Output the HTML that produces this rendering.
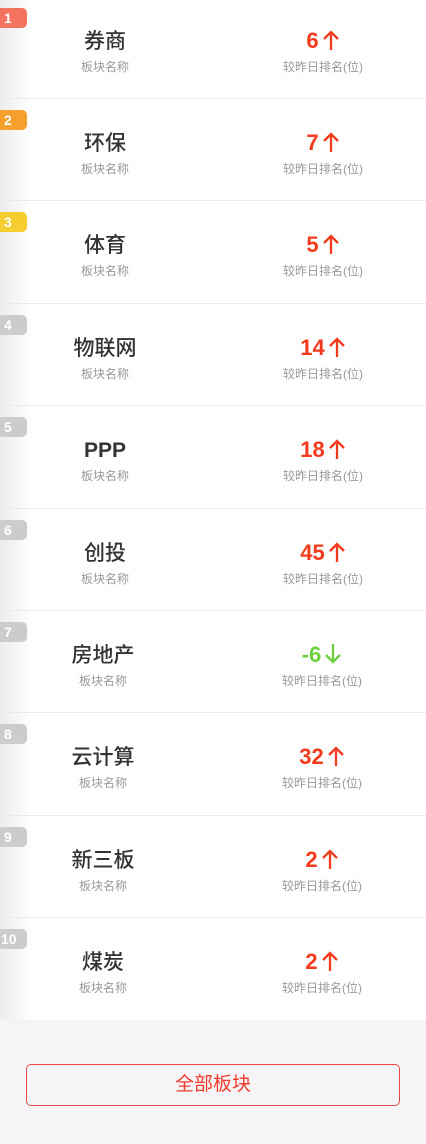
<!DOCTYPE html>
<html><head><meta charset="utf-8"><style>
*{margin:0;padding:0;box-sizing:border-box}
body{width:426px;height:1144px;background:#f5f5f7;font-family:"Liberation Sans","Noto Sans CJK SC",sans-serif;position:relative;overflow:hidden}
.list{position:absolute;left:0;top:0;width:426px;height:1020px;background:#fff;overflow:hidden}
.row{position:absolute;left:0;width:426px;height:102.4px;border-bottom:1px solid #ebebeb;background:linear-gradient(to right,#ececec 0,#fff 32px)}
.badge{position:absolute;left:0;top:11px;width:27px;height:20px;border-radius:0 5px 5px 0;color:#fff;font-size:14px;font-weight:bold;line-height:20px;padding-left:4px}
.name{position:absolute;left:35px;width:140px;top:31px;text-align:center;font-size:21px;font-weight:500;color:#333;line-height:28px}
.sub{position:absolute;top:62px;text-align:center;font-size:12px;color:#999;line-height:16px}
.num{position:absolute;left:253px;width:140px;top:30px;text-align:center;font-size:22px;font-weight:bold;color:#f23a1c;line-height:28px}
.num svg{vertical-align:-3px;margin-left:3px}
.g{color:#6bcf3e}
.btn{position:absolute;left:26px;top:1064px;width:374px;height:42px;border:1px solid #e94848;border-radius:5px;color:#ef3b2c;font-size:19px;text-align:center;line-height:40px}
</style></head><body>
<div class="list">
<div class="row" style="top:-3.4px"><div class="badge" style="background:#f4735f">1</div><div class="name">券商</div><div class="sub" style="left:35px;width:140px">板块名称</div><div class="num">6<svg width="18" height="22" viewBox="0 0 18 22"><path d="M9 21V3M2 10l7-7 7 7" fill="none" stroke="#f23a1c" stroke-width="2.3"/></svg></div><div class="sub" style="left:253px;width:140px">较昨日排名(位)</div></div>
<div class="row" style="top:99px"><div class="badge" style="background:#f5a02c">2</div><div class="name">环保</div><div class="sub" style="left:35px;width:140px">板块名称</div><div class="num">7<svg width="18" height="22" viewBox="0 0 18 22"><path d="M9 21V3M2 10l7-7 7 7" fill="none" stroke="#f23a1c" stroke-width="2.3"/></svg></div><div class="sub" style="left:253px;width:140px">较昨日排名(位)</div></div>
<div class="row" style="top:201.4px"><div class="badge" style="background:#f5cd2e">3</div><div class="name">体育</div><div class="sub" style="left:35px;width:140px">板块名称</div><div class="num">5<svg width="18" height="22" viewBox="0 0 18 22"><path d="M9 21V3M2 10l7-7 7 7" fill="none" stroke="#f23a1c" stroke-width="2.3"/></svg></div><div class="sub" style="left:253px;width:140px">较昨日排名(位)</div></div>
<div class="row" style="top:303.8px"><div class="badge" style="background:#ccc">4</div><div class="name">物联网</div><div class="sub" style="left:35px;width:140px">板块名称</div><div class="num">14<svg width="18" height="22" viewBox="0 0 18 22"><path d="M9 21V3M2 10l7-7 7 7" fill="none" stroke="#f23a1c" stroke-width="2.3"/></svg></div><div class="sub" style="left:253px;width:140px">较昨日排名(位)</div></div>
<div class="row" style="top:406.2px"><div class="badge" style="background:#ccc">5</div><div class="name" style="font-weight:bold">PPP</div><div class="sub" style="left:35px;width:140px">板块名称</div><div class="num">18<svg width="18" height="22" viewBox="0 0 18 22"><path d="M9 21V3M2 10l7-7 7 7" fill="none" stroke="#f23a1c" stroke-width="2.3"/></svg></div><div class="sub" style="left:253px;width:140px">较昨日排名(位)</div></div>
<div class="row" style="top:508.6px"><div class="badge" style="background:#ccc">6</div><div class="name">创投</div><div class="sub" style="left:35px;width:140px">板块名称</div><div class="num">45<svg width="18" height="22" viewBox="0 0 18 22"><path d="M9 21V3M2 10l7-7 7 7" fill="none" stroke="#f23a1c" stroke-width="2.3"/></svg></div><div class="sub" style="left:253px;width:140px">较昨日排名(位)</div></div>
<div class="row" style="top:611px"><div class="badge" style="background:#ccc">7</div><div class="name" style="left:33px">房地产</div><div class="sub" style="left:33px;width:140px">板块名称</div><div class="num g" style="left:252px">-6<svg width="18" height="22" viewBox="0 0 18 22"><path d="M9 1v18M2 12l7 7 7-7" fill="none" stroke="#6bcf3e" stroke-width="2.3"/></svg></div><div class="sub" style="left:252px;width:140px">较昨日排名(位)</div></div>
<div class="row" style="top:713.4px"><div class="badge" style="background:#ccc">8</div><div class="name" style="left:33px">云计算</div><div class="sub" style="left:33px;width:140px">板块名称</div><div class="num" style="left:252px">32<svg width="18" height="22" viewBox="0 0 18 22"><path d="M9 21V3M2 10l7-7 7 7" fill="none" stroke="#f23a1c" stroke-width="2.3"/></svg></div><div class="sub" style="left:252px;width:140px">较昨日排名(位)</div></div>
<div class="row" style="top:815.8px"><div class="badge" style="background:#ccc">9</div><div class="name" style="left:33px">新三板</div><div class="sub" style="left:33px;width:140px">板块名称</div><div class="num" style="left:252px">2<svg width="18" height="22" viewBox="0 0 18 22"><path d="M9 21V3M2 10l7-7 7 7" fill="none" stroke="#f23a1c" stroke-width="2.3"/></svg></div><div class="sub" style="left:252px;width:140px">较昨日排名(位)</div></div>
<div class="row" style="top:918.2px;border-bottom:none;height:102px"><div class="badge" style="background:#ccc;padding-left:1px">10</div><div class="name" style="left:33px">煤炭</div><div class="sub" style="left:33px;width:140px">板块名称</div><div class="num" style="left:252px">2<svg width="18" height="22" viewBox="0 0 18 22"><path d="M9 21V3M2 10l7-7 7 7" fill="none" stroke="#f23a1c" stroke-width="2.3"/></svg></div><div class="sub" style="left:252px;width:140px">较昨日排名(位)</div></div>
</div>
<div class="btn">全部板块</div>
</body></html>
